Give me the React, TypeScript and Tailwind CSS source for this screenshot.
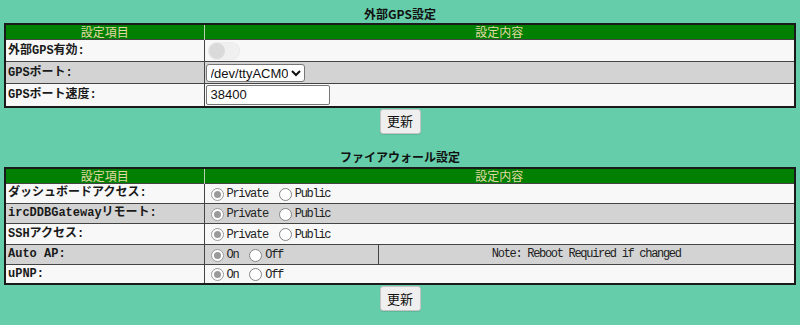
import React from "react";

const labelCls =
  "py-0 pl-[2px] text-left align-middle font-bold text-[12px] leading-[16px] text-[#1a1a1a] border-r border-[#444] [font-family:'Liberation_Mono','Noto_Sans_CJK_JP',monospace]";
const monoCls =
  "text-[12px] leading-[14px] tracking-[-1.3px] text-[#222] [font-family:'Liberation_Mono','Noto_Sans_CJK_JP',monospace]";

const Header = ({ span }: { span: number }) => (
  <tr className="h-[15px] bg-[#008000] text-[12px] leading-[14px] text-[#e2d9a6] [font-family:'Noto_Sans_CJK_JP',sans-serif]">
    <th className="w-[199px] border-r border-[#b8ccb8] p-0 font-normal">設定項目</th>
    <th colSpan={span} className="p-0 font-normal">
      設定内容
    </th>
  </tr>
);

// gray disabled-looking radio, drawn by hand so the tint matches
const Radio = ({ checked }: { checked?: boolean }) => (
  <span
    className={`flex h-[13px] w-[13px] shrink-0 items-center justify-center rounded-full border ${
      checked ? "border-[#9a9a9a] bg-white" : "border-[#858585] bg-white"
    }`}
  >
    {checked && <span className="h-[7px] w-[7px] rounded-full bg-[#9a9a9a]" />}
  </span>
);

const RadioPair = ({ a, b }: { a: string; b: string }) => (
  <div className="flex h-[16px] items-center pt-[2px]">
    <span className="ml-[6px] mr-[3px] flex">
      <Radio checked />
    </span>
    <span className={monoCls}>{a}</span>
    <span className="ml-[11px] mr-[3px] flex">
      <Radio />
    </span>
    <span className={monoCls}>{b}</span>
  </div>
);

const UpdateButton = () => (
  <div className="flex justify-center pt-[1px]">
    <button className="h-[25px] w-[41px] rounded-[3px] border border-[#c4c4c4] bg-[#efefef] text-[13px] leading-[16px] text-[#111] shadow-[0_1px_1px_rgba(0,0,0,0.1)] [font-family:'Noto_Sans_CJK_JP',sans-serif]">
      更新
    </button>
  </div>
);

export default function App() {
  const fw = [
    { label: "ダッシュボードアクセス:", name: "dash", h: "h-[20px]" },
    { label: "ircDDBGatewayリモート:", name: "irc", h: "h-[20px]" },
    { label: "SSHアクセス:", name: "ssh", h: "h-[21px]" },
  ];

  return (
    <div className="min-h-screen bg-[#66cdaa] px-[4px] pt-[5px]">
      <div className="h-[18px] text-center text-[12px] font-bold leading-[18px] text-[#111] [font-family:'Noto_Sans_CJK_JP',sans-serif]">
        外部GPS設定
      </div>
      <table className="w-full border-collapse border-2 border-[#1a1a1a]">
        <tbody>
          <Header span={1} />
          <tr className="h-[22px] border-t border-[#444] bg-[#f8f8f8]">
            <td className={labelCls}>外部GPS有効:</td>
            <td className="px-[2px] py-0 align-middle">
              <div className="relative ml-[1px] h-[18px] w-[32px] rounded-full bg-[#f0f0f0] shadow-[inset_0_0_1px_rgba(0,0,0,0.12)]">
                <span className="absolute left-[1px] top-[1px] h-[16px] w-[16px] rounded-full bg-[#dadada]" />
              </div>
            </td>
          </tr>
          <tr className="h-[22px] border-t border-[#444] bg-[#d3d3d3]">
            <td className={labelCls}>GPSポート:</td>
            <td className="px-[1px] py-0 align-middle">
              <select
                defaultValue="acm0"
                className="block h-[18px] w-[99px] rounded-[3px] border border-[#767676] bg-white pl-0 text-[13px] leading-[16px] text-[#111] [font-family:'Liberation_Sans',sans-serif]"
              >
                <option value="acm0">/dev/ttyACM0</option>
              </select>
            </td>
          </tr>
          <tr className="h-[23px] border-t border-[#444] bg-[#f8f8f8]">
            <td className={labelCls}>GPSポート速度:</td>
            <td className="px-[1px] py-0 align-middle">
              <input
                type="text"
                defaultValue="38400"
                className="block h-[20px] w-[124px] rounded-[2px] border border-[#767676] bg-white px-[4px] text-[13px] leading-[16px] text-[#111] [font-family:'Liberation_Sans',sans-serif]"
              />
            </td>
          </tr>
        </tbody>
      </table>
      <UpdateButton />

      <div className="mt-[12px] h-[21px] text-center text-[12px] font-bold leading-[21px] text-[#111] [font-family:'Noto_Sans_CJK_JP',sans-serif]">
        ファイアウォール設定
      </div>
      <table className="w-full table-fixed border-collapse border-2 border-[#1a1a1a]">
        <colgroup>
          <col className="w-[199px]" />
          <col className="w-[174px]" />
          <col />
        </colgroup>
        <tbody>
          <Header span={2} />
          {fw.map((r, i) => (
            <tr
              key={r.name}
              className={`${r.h} border-t border-[#444] ${i % 2 === 0 ? "bg-[#f8f8f8]" : "bg-[#d3d3d3]"}`}
            >
              <td className={labelCls}>{r.label}</td>
              <td colSpan={2} className="p-0 align-middle">
                <RadioPair a="Private" b="Public" />
              </td>
            </tr>
          ))}
          <tr className="h-[20px] border-t border-[#444] bg-[#d3d3d3]">
            <td className={labelCls}>Auto AP:</td>
            <td className="border-r border-[#444] p-0 align-middle">
              <RadioPair a="On" b="Off" />
            </td>
            <td className={`p-0 text-center align-middle ${monoCls}`}>Note: Reboot Required if changed</td>
          </tr>
          <tr className="h-[20px] border-t border-[#444] bg-[#f8f8f8]">
            <td className={labelCls}>uPNP:</td>
            <td colSpan={2} className="p-0 align-middle">
              <RadioPair a="On" b="Off" />
            </td>
          </tr>
        </tbody>
      </table>
      <UpdateButton />
    </div>
  );
}
